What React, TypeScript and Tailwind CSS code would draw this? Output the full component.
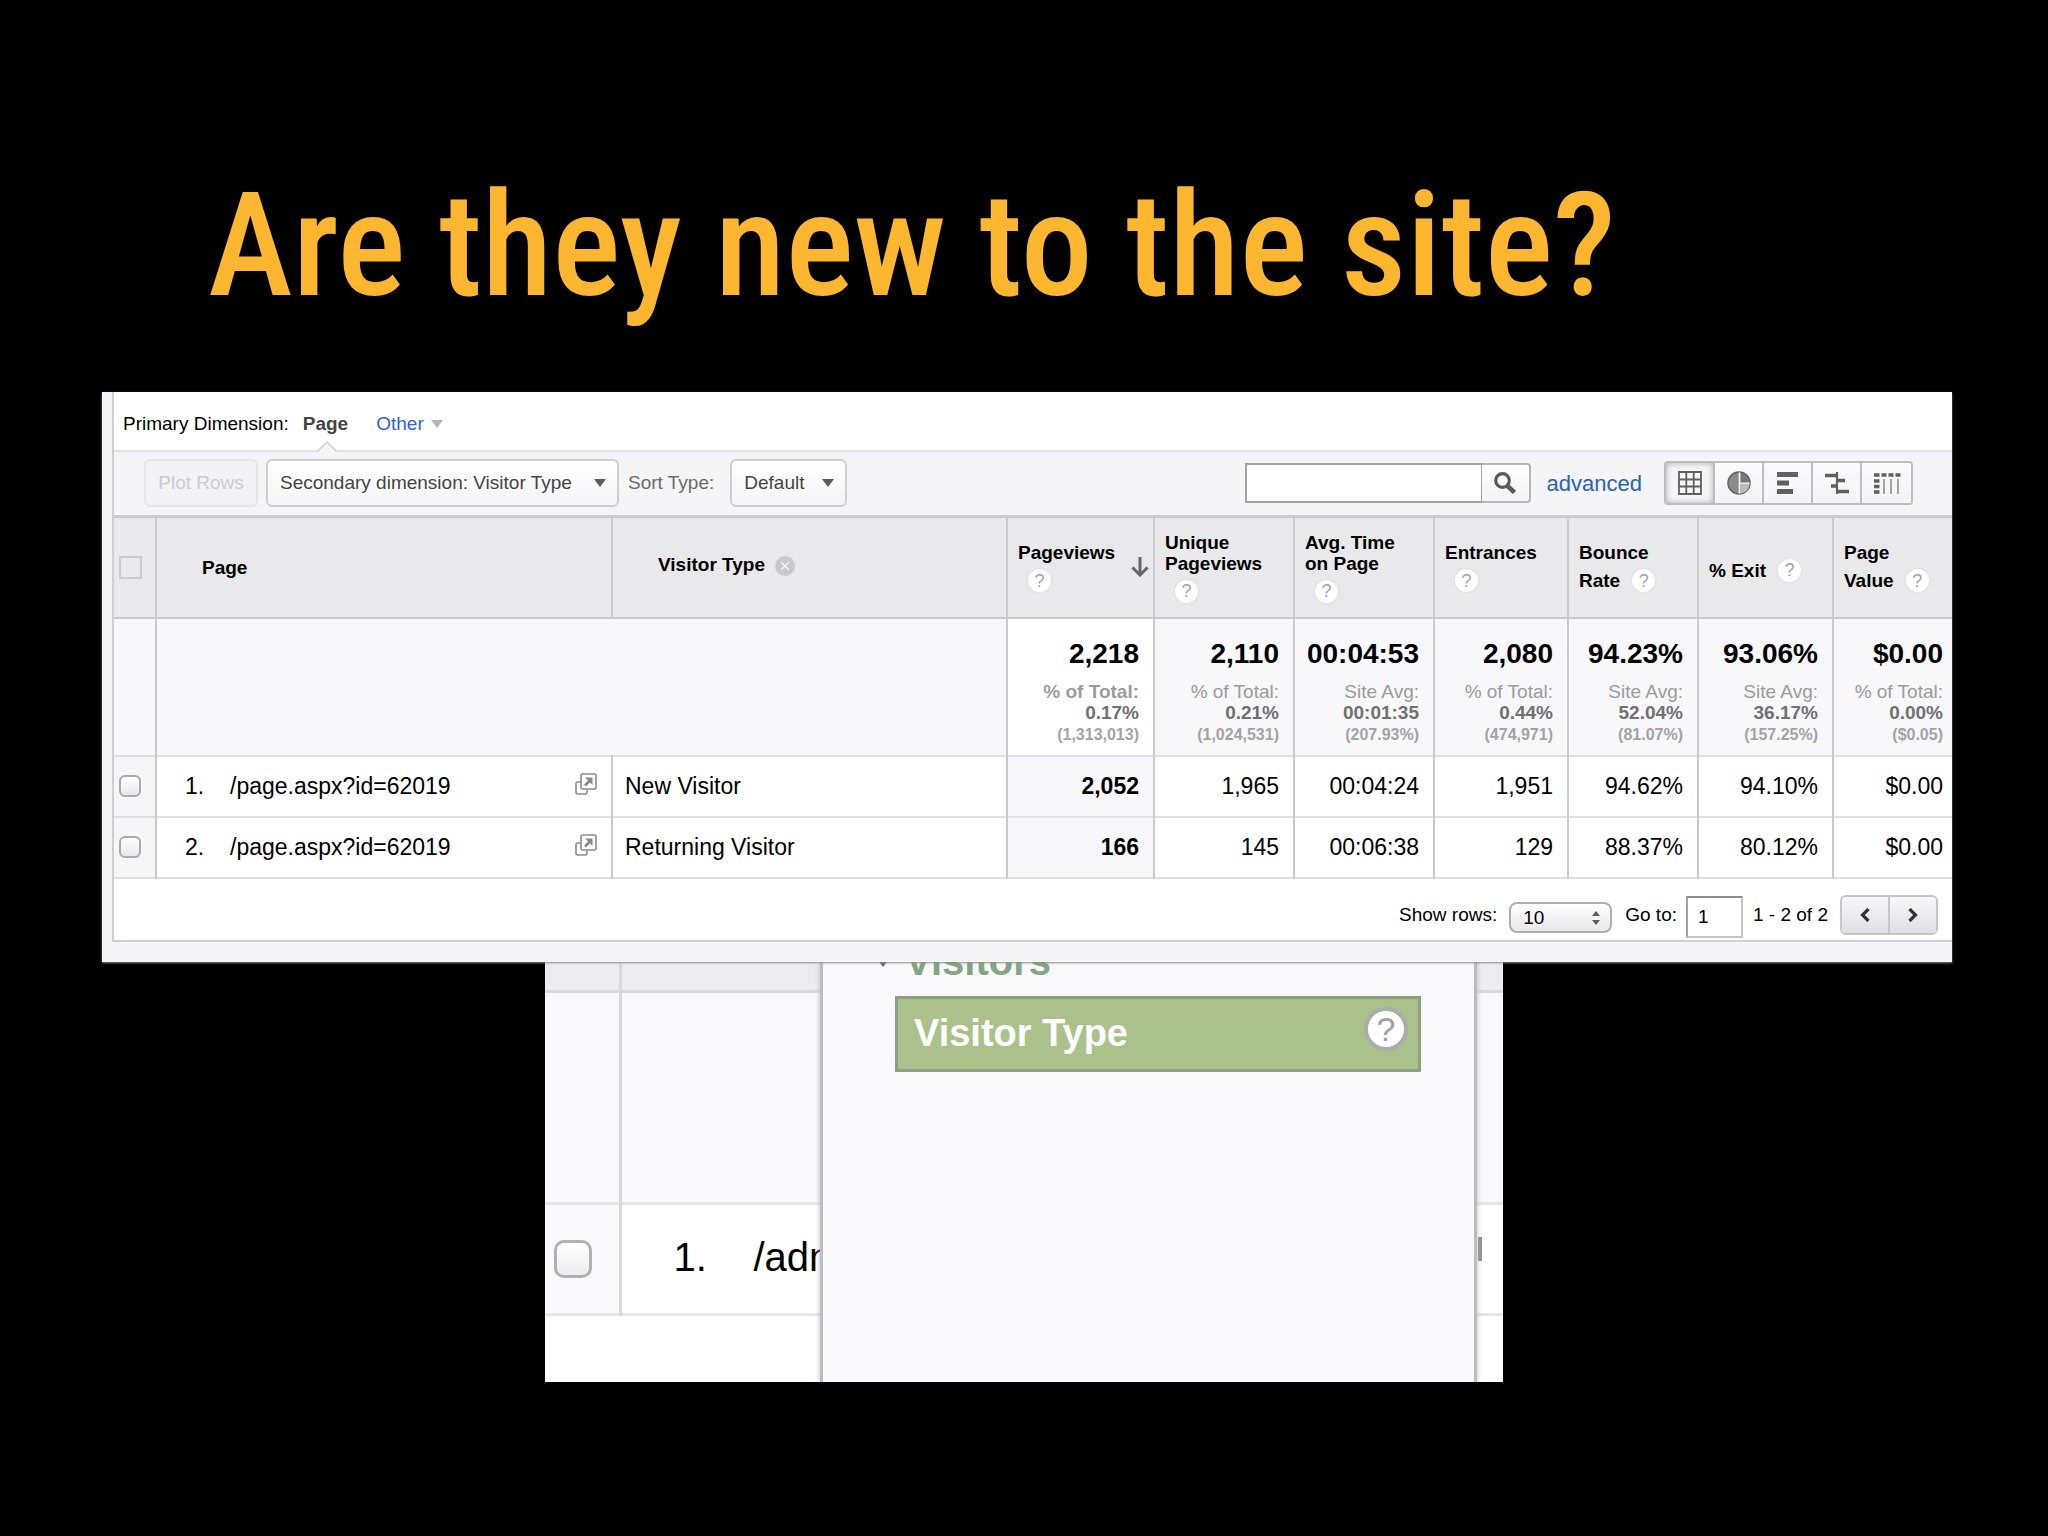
import type { ReactNode } from "react";

const metrics = [
  {
    lines: ["Pageviews"],
    total: "2,218",
    label: "% of Total:",
    share: "0.17%",
    base: "(1,313,013)",
    rows: ["2,052", "166"],
    sorted: true,
  },
  {
    lines: ["Unique", "Pageviews"],
    total: "2,110",
    label: "% of Total:",
    share: "0.21%",
    base: "(1,024,531)",
    rows: ["1,965", "145"],
  },
  {
    lines: ["Avg. Time", "on Page"],
    total: "00:04:53",
    label: "Site Avg:",
    share: "00:01:35",
    base: "(207.93%)",
    rows: ["00:04:24", "00:06:38"],
  },
  {
    lines: ["Entrances"],
    total: "2,080",
    label: "% of Total:",
    share: "0.44%",
    base: "(474,971)",
    rows: ["1,951", "129"],
  },
  {
    lines: ["Bounce"],
    last: "Rate",
    total: "94.23%",
    label: "Site Avg:",
    share: "52.04%",
    base: "(81.07%)",
    rows: ["94.62%", "88.37%"],
  },
  {
    lines: [],
    last: "% Exit",
    total: "93.06%",
    label: "Site Avg:",
    share: "36.17%",
    base: "(157.25%)",
    rows: ["94.10%", "80.12%"],
  },
  {
    lines: ["Page"],
    last: "Value",
    total: "$0.00",
    label: "% of Total:",
    share: "0.00%",
    base: "($0.05)",
    rows: ["$0.00", "$0.00"],
    edge: true,
  },
];

const visitors = [
  { page: "/page.aspx?id=62019", type: "New Visitor" },
  { page: "/page.aspx?id=62019", type: "Returning Visitor" },
];

function Caret({ className }: { className: string }) {
  return (
    <svg viewBox="0 0 12 8" className={className} fill="currentColor">
      <path d="M0 0h12L6 8z" />
    </svg>
  );
}

function HelpIcon() {
  return (
    <button
      type="button"
      aria-label="Help"
      className="grid size-[23px] shrink-0 place-items-center rounded-full bg-white text-lg leading-none font-normal text-[#a3a3a5] shadow-[0_0_2px_#ccc]"
    >
      ?
    </button>
  );
}

function PopoutIcon() {
  return (
    <svg viewBox="0 0 22 22" className="h-[22px] w-[22px]" fill="none" stroke="#8a8a8c" strokeWidth="1.6">
      <path d="M6 9H2.6A1.6 1.6 0 0 0 1 10.6V19.4A1.6 1.6 0 0 0 2.6 21H10.4A1.6 1.6 0 0 0 12 19.4V16.5" />
      <rect x="6" y="1" width="15" height="15" rx="1.6" />
      <path d="M10 12.5L15 7.5" strokeWidth="2.8" />
      <path d="M10 4.5H17.5V12z" fill="#8a8a8c" stroke="none" />
    </svg>
  );
}

function ViewButton({ label, active, children }: { label: string; active?: boolean; children: ReactNode }) {
  return (
    <button
      type="button"
      aria-label={label}
      className={
        active
          ? "grid h-10 w-[49px] place-items-center bg-[#f6f5f7] shadow-[inset_0_0_6px_#aaa]"
          : "grid h-10 w-[49px] place-items-center bg-linear-to-b from-[#fbfafc] to-[#f4f3f5]"
      }
    >
      <svg viewBox="0 0 28 24" className="h-6 w-7" fill="none" stroke="#606062">
        {children}
      </svg>
    </button>
  );
}

function Toolbar() {
  return (
    <div className="flex h-[65px] items-center border-t-2 border-[#e4e3e5] bg-[#f5f4f6] pr-[39px] pb-px pl-[30px]">
      <button
        type="button"
        disabled
        className="h-12 w-[114px] rounded-md border-2 border-[#e6e5e7] bg-[#f3f2f4] text-[19px] text-[#cbcbcd]"
      >
        Plot Rows
      </button>
      <div className="relative ml-2">
        <select
          aria-label="Secondary dimension"
          className="h-12 w-[353px] appearance-none rounded-md border-2 border-[#cfced0] bg-linear-to-b from-white to-[#f5f4f6] pl-3 text-[19px] text-[#444]"
        >
          <option>Secondary dimension: Visitor Type</option>
        </select>
        <Caret className="pointer-events-none absolute top-5 right-[13px] h-2 w-3 text-[#5c5c5e]" />
      </div>
      <label htmlFor="sort" className="ml-[9px] text-[19px] text-[#6c6c6e]">
        Sort Type:
      </label>
      <div className="relative ml-4">
        <select
          id="sort"
          className="h-12 w-[117px] appearance-none rounded-md border-2 border-[#cfced0] bg-linear-to-b from-white to-[#f5f4f6] pl-3 text-[19px] text-[#444]"
        >
          <option>Default</option>
        </select>
        <Caret className="pointer-events-none absolute top-5 right-[13px] h-2 w-3 text-[#5c5c5e]" />
      </div>

      <div className="ml-auto flex">
        <input
          type="text"
          aria-label="Search"
          className="h-10 w-[237px] border-2 border-r border-[#a3a2a4] bg-white px-2 text-[19px] outline-none"
        />
        <button
          type="button"
          aria-label="Run search"
          className="grid h-10 w-[49px] place-items-center rounded-r border-2 border-l-0 border-[#b7b6b8] bg-linear-to-b from-white to-[#f3f2f4]"
        >
          <svg viewBox="0 0 24 22" className="h-[22px] w-6" fill="none" stroke="#5a5a5c">
            <circle cx="9.500" cy="8.500" r="6.800" strokeWidth="3.200" />
            <path d="M14.500 14L21.500 20.500" strokeWidth="4.500" />
          </svg>
        </button>
      </div>
      <a href="#advanced" className="ml-4 text-[22px] text-[#2a63b3]">
        advanced
      </a>

      <div className="ml-[22px] flex divide-x-2 divide-[#bdbcbe] overflow-hidden rounded border-2 border-[#bdbcbe]">
        <ViewButton label="Table" active>
          <path d="M3 1h22v22h-22zM10.300 1v22M17.700 1v22M3 8.500h22M3 15.500h22" strokeWidth="1.800" />
        </ViewButton>
        <ViewButton label="Percentage">
          <circle cx="14" cy="12" r="11" fill="#8b8b8d" strokeWidth="1.500" />
          <path d="M15.500 12V1.500A10.500 10.500 0 0 1 24.500 11z" fill="#78787a" stroke="none" />
          <path d="M15.500 14H24.500A10.500 10.500 0 0 1 15.500 22.500z" fill="#bcbcbe" stroke="none" />
          <path d="M14.500 1.500V22.500M14.500 12.500H24.500" stroke="#eee" strokeWidth="1.800" />
        </ViewButton>
        <ViewButton label="Performance">
          <path d="M3 3.500h21M3 12h12M3 20.500h16" strokeWidth="5" />
        </ViewButton>
        <ViewButton label="Comparison">
          <path d="M2 4.500h12M14 9.500h8M8 15h6M14 20.500h12" strokeWidth="3.600" />
          <path d="M14 1v22" strokeWidth="2.200" />
        </ViewButton>
        <ViewButton label="Pivot">
          <path d="M1 4h5.500M8.500 4h5M15.500 4h5M22.500 4h5M1 10h5.500M1 15.500h5.500M1 21h5.500" strokeWidth="3.600" />
          <path d="M11 8v15M18 8v15M25 8v15" stroke="#9a9a9c" strokeWidth="1.800" />
        </ViewButton>
      </div>
    </div>
  );
}

function ReportTable() {
  return (
    <table className="w-full table-fixed border-collapse">
      <colgroup>
        <col className="w-[42px]" />
        <col className="w-[456px]" />
        <col />
        <col className="w-[147px]" />
        <col className="w-[140px]" />
        <col className="w-[140px]" />
        <col className="w-[134px]" />
        <col className="w-[130px]" />
        <col className="w-[135px]" />
        <col className="w-[119px]" />
      </colgroup>
      <thead>
        <tr className="h-[101px] border-t-[3px] border-b-2 border-[#cac9cb] bg-[#e9e8ea] text-left text-[19px] leading-[21px]">
          <th className="border-r-2 border-[#cac9cb]">
            <input
              type="checkbox"
              aria-label="Select all"
              className="ml-[5px] block size-[23px] appearance-none border-2 border-[#cbcacc]"
            />
          </th>
          <th className="border-r-2 border-[#cac9cb] pl-[45px]">Page</th>
          <th className="border-r-2 border-[#cac9cb] pb-1.5 pl-[45px]">
            <div className="flex items-center gap-2.5">
              Visitor Type
              <button
                type="button"
                aria-label="Remove dimension"
                className="mt-1 grid size-5 place-items-center rounded-full bg-[#c9c8ca]"
              >
                <svg viewBox="0 0 10 10" className="size-2.5" stroke="#f2f2f2" strokeWidth="1.6">
                  <path d="M1 1l8 8M9 1l-8 8" />
                </svg>
              </button>
            </div>
          </th>
          {metrics.map((m) => (
            <th key={m.base} className={m.edge ? "pl-2.5" : "border-r-2 border-[#cac9cb] pl-2.5"}>
              <div className="flex items-center justify-between pr-1">
                <div>
                  {m.lines.map((line) => (
                    <div key={line}>{line}</div>
                  ))}
                  <div className={m.last ? "mt-1.5 flex items-center gap-3" : "mt-1.5 pl-2.5"}>
                    {m.last}
                    <HelpIcon />
                  </div>
                </div>
                {m.sorted && (
                  <svg viewBox="0 0 18 20" className="h-5 w-[18px]" fill="none" stroke="#666668" strokeWidth="3">
                    <path d="M9 0V18M1.500 10.500L9 18L16.500 10.500" />
                  </svg>
                )}
              </div>
            </th>
          ))}
        </tr>
      </thead>
      <tbody>
        <tr className="h-[138px] border-b-2 border-[#e0dfe1] bg-[#f8f7fa]">
          <td className="border-r-2 border-[#cac9cb]"></td>
          <td colSpan={2} className="border-r-2 border-[#cac9cb]"></td>
          {metrics.map((m) => (
            <td
              key={m.base}
              className={
                m.sorted
                  ? "border-r-2 border-[#cac9cb] bg-white pt-1.5 pr-3.5 text-right"
                  : m.edge
                    ? "pt-1.5 pr-[9px] text-right"
                    : "border-r-2 border-[#cac9cb] pt-1.5 pr-3.5 text-right"
              }
            >
              <div className="mb-1.5 text-[28px] leading-[42px] font-bold">{m.total}</div>
              <div
                className={
                  m.sorted
                    ? "text-[19px] leading-[21px] font-bold whitespace-nowrap text-[#9b9b9d]"
                    : "text-[19px] leading-[21px] whitespace-nowrap text-[#9b9b9d]"
                }
              >
                {m.label}
              </div>
              <div className="text-[19px] leading-[21px] font-bold text-[#707072]">{m.share}</div>
              <div className="text-base leading-[23px] font-bold text-[#a3a3a5]">{m.base}</div>
            </td>
          ))}
        </tr>
        {visitors.map((v, i) => (
          <tr key={v.type} className="h-[61px] border-b-2 border-[#e0dfe1] text-[23px]">
            <td className="border-r-2 border-[#cac9cb] bg-[#f6f5f8]">
              <input
                type="checkbox"
                aria-label={"Select row " + (i + 1)}
                className="ml-[5px] block size-[22px] appearance-none rounded-md border-2 border-[#a9a8aa] bg-linear-to-b from-white to-[#e8e7e9]"
              />
            </td>
            <td className="border-r-2 border-[#cac9cb] pr-3.5 pl-7">
              <div className="flex items-center">
                <span className="w-[45px]">{i + 1}.</span>
                <span className="grow">{v.page}</span>
                <a href="#page" aria-label="Open page" className="mb-1">
                  <PopoutIcon />
                </a>
              </div>
            </td>
            <td className="border-r-2 border-[#cac9cb] pl-3">{v.type}</td>
            {metrics.map((m) => (
              <td
                key={m.base}
                className={
                  m.sorted
                    ? "border-r-2 border-[#cac9cb] bg-[#f8f7fa] pr-3.5 text-right font-bold"
                    : m.edge
                      ? "pr-[9px] text-right"
                      : "border-r-2 border-[#cac9cb] pr-3.5 text-right"
                }
              >
                {m.rows[i]}
              </td>
            ))}
          </tr>
        ))}
      </tbody>
    </table>
  );
}

function Pager() {
  return (
    <div className="flex h-[61px] items-center justify-end pt-3 pr-3.5 text-[19px]">
      <label htmlFor="rows">Show rows:</label>
      <div className="relative mt-1 ml-3">
        <select
          id="rows"
          className="block h-[31px] w-[103px] appearance-none rounded-lg border-2 border-[#aeadaf] bg-linear-to-b from-white to-[#e9e8ea] pl-3"
        >
          <option>10</option>
        </select>
        <svg
          viewBox="0 0 8 14"
          className="pointer-events-none absolute top-[9px] right-3 h-3.5 w-2"
          fill="#5c5c5e"
        >
          <path d="M0 5L4 0L8 5zM0 9H8L4 14z" />
        </svg>
      </div>
      <label htmlFor="goto" className="ml-[13px]">
        Go to:
      </label>
      <input
        id="goto"
        type="text"
        defaultValue="1"
        className="mt-1 ml-[9px] h-[42px] w-[57px] border-2 border-[#c4c3c5] border-t-[#8d8c8e] border-l-[#a3a2a4] bg-white pl-2.5 outline-none"
      />
      <span className="ml-2.5">1 - 2 of 2</span>
      <div className="ml-3 flex divide-x-2 divide-[#c6c5c7] overflow-hidden rounded-md border-2 border-[#c6c5c7]">
        <button
          type="button"
          aria-label="Previous page"
          className="grid h-9 w-12 place-items-center bg-linear-to-b from-[#f8f7f9] to-[#dfdee0]"
        >
          <svg viewBox="0 0 10 14" className="h-3.5 w-2.5" fill="none" stroke="#333" strokeWidth="3.2">
            <path d="M8.500 1L2.500 7L8.500 13" />
          </svg>
        </button>
        <button
          type="button"
          aria-label="Next page"
          className="grid h-9 w-[46px] place-items-center bg-linear-to-b from-[#f8f7f9] to-[#dfdee0]"
        >
          <svg viewBox="0 0 10 14" className="h-3.5 w-2.5" fill="none" stroke="#333" strokeWidth="3.2">
            <path d="M1.500 1L7.500 7L1.500 13" />
          </svg>
        </button>
      </div>
    </div>
  );
}

function DimensionMenu() {
  return (
    <div className="absolute inset-y-0 right-[26px] left-[275px] border-r-[3px] border-l-[3px] border-[#bdbcbe] bg-[#f9f8fb] pl-[42px] shadow-[0_0_5px_#bbb]">
      <div className="flex h-[34px] items-start">
        <div className="-mt-6 flex items-center gap-4 text-[40px] leading-[46px] font-bold text-[#84a583]">
          <Caret className="mt-1 ml-3 h-2 w-3 text-[#666]" />
          Visitors
        </div>
      </div>
      <a
        href="#visitor-type"
        className="mr-[53px] ml-[30px] flex h-[76px] items-center justify-between border-[3px] border-[#8ca07f] bg-[#aac18c] pr-2.5 pl-4 text-[38px] font-bold text-white"
      >
        Visitor Type
        <span className="mb-2.5 grid size-11 place-items-center rounded-full border-4 border-[#a9adab] bg-white text-[34px] leading-none font-normal text-[#a0a0a2]">
          ?
        </span>
      </a>
    </div>
  );
}

function BackPanel() {
  return (
    <section className="relative mx-auto w-[958px] overflow-hidden bg-white">
      <table className="w-full table-fixed border-collapse text-[40px]">
        <colgroup>
          <col className="w-[75px]" />
          <col />
        </colgroup>
        <tbody>
          <tr className="h-[30px] border-b-[3px] border-[#d9d8da] bg-[#ecebed]">
            <td className="border-r-[3px] border-[#d9d8da]"></td>
            <td></td>
          </tr>
          <tr className="h-[212px] border-b-[3px] border-[#e6e5e7] bg-[#f9f8fb]">
            <td className="border-r-[3px] border-[#d9d8da]"></td>
            <td></td>
          </tr>
          <tr className="h-[111px] border-b-[3px] border-[#e6e5e7]">
            <td className="border-r-[3px] border-[#d9d8da] bg-[#f9f8fb]">
              <input
                type="checkbox"
                aria-label="Select page"
                className="ml-[9px] block size-[38px] appearance-none rounded-[10px] border-[3px] border-[#b1b0b2] bg-linear-to-b from-white to-[#eeedef]"
              />
            </td>
            <td className="pr-[21px] pb-1 pl-[52px]">
              <div className="flex items-center">
                <span className="w-20">1.</span>
                <span className="grow">/adn</span>
                <span className="mb-4 h-6 w-1 bg-[#8f8f91]"></span>
              </div>
            </td>
          </tr>
          <tr className="h-[67px]">
            <td colSpan={2}></td>
          </tr>
        </tbody>
      </table>
      <DimensionMenu />
    </section>
  );
}

export default function App() {
  return (
    <main className="min-h-screen bg-black font-['Liberation_Sans',Arial,sans-serif] text-black">
      <h1 className="pt-[150px] pb-[50px] pl-[208px] font-['Roboto_Condensed','Liberation_Sans',sans-serif] text-[144px] leading-[192px] font-medium text-[#fdb62f]">
        Are they new to the site?
      </h1>
      <section className="relative z-10 mr-24 ml-[102px] bg-[#f5f4f6] pb-5 shadow-[0_1px_2px_#888]">
        <div className="ml-[10px] border-b-2 border-l-2 border-[#cfced0] bg-white">
          <div className="flex h-[58px] items-center pt-1.5 pl-[9px] text-[19px]">
            <span>Primary Dimension:</span>
            <span className="relative ml-3.5 font-bold text-[#444]">
              Page
              <svg
                viewBox="0 0 20 11"
                className="absolute top-[31px] left-3.5 h-[11px] w-5"
                fill="#f5f4f6"
                stroke="#d3d2d4"
                strokeWidth="1.6"
              >
                <path d="M0 11L10 1L20 11" />
              </svg>
            </span>
            <button type="button" className="ml-7 flex items-center gap-[7px] text-[#2f5fe0]">
              Other
              <Caret className="h-2 w-3 text-[#b4b4b6]" />
            </button>
          </div>
          <Toolbar />
          <ReportTable />
          <Pager />
        </div>
      </section>
      <BackPanel />
    </main>
  );
}
